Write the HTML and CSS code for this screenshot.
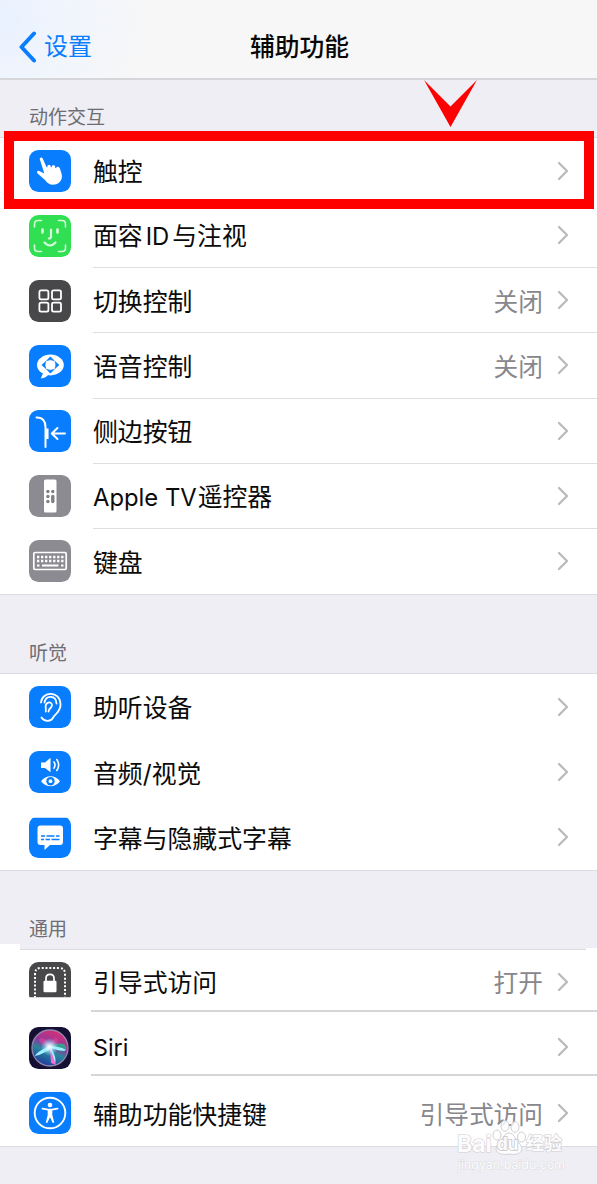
FILE: index.html
```html
<!DOCTYPE html>
<html lang="zh-CN">
<head>
<meta charset="utf-8">
<title>辅助功能</title>
<link rel="stylesheet" href="styles.css">
</head>
<body>
<svg class="defs" width="0" height="0"><defs>
  <symbol id="chevron" viewBox="0 0 12 20"><path d="M2 2l8 8-8 8" fill="none" stroke="#bababd" stroke-width="2.300" stroke-linecap="round" stroke-linejoin="round"/></symbol>
  <radialGradient id="siri-bg"><stop offset="0" stop-color="#3c1a66"/><stop offset="1" stop-color="#151033"/></radialGradient>
  <linearGradient id="siri-orb" x1="0.7" y1="0" x2="0.3" y2="1"><stop offset="0" stop-color="#e02c73"/><stop offset="0.42" stop-color="#8b3b9e"/><stop offset="0.6" stop-color="#27879c"/><stop offset="1" stop-color="#2035a0"/></linearGradient>
  <radialGradient id="siri-glow"><stop offset="0" stop-color="#fff"/><stop offset="0.3" stop-color="#d9f7ff" stop-opacity="0.85"/><stop offset="1" stop-color="#68dcff" stop-opacity="0"/></radialGradient>
</defs></svg>
<div class="screen">
  <header class="nav">
    <a class="back"><svg class="back-arrow" viewBox="0 0 18 32"><path d="M15.500 2.500L3 16l12.500 13.500" fill="none" stroke="#087dfe" stroke-width="4" stroke-linecap="round" stroke-linejoin="round"/></svg><span>设置</span></a>
    <h1 class="title">辅助功能</h1>
  </header>

  <h2 class="heading first">动作交互</h2>
  <section class="group">
    <div class="row"><svg class="icon blue" viewBox="0 0 42 42"><path d="M10.800 9.300C10.500 7.300 13 6.700 13.800 8.700L17.600 17.200L18.400 17.300V16C18.700 14.500 21.400 14.700 21.700 16V17.200L22.800 17.300V16C23.300 14.600 25.900 15 26.200 16.400V18L27.300 18.300V17.400C28 16.300 30.300 16.700 30.900 18.500L32.600 23.700C34 29 31 33.500 26 34.600C21.500 35.200 18.500 33.700 16 30L8.600 23.600C7.300 21.600 8.500 20.300 10.300 20.900L15.300 23.600Z" fill="#fff"/></svg><div class="cell"><span class="label">触控</span><svg class="chev"><use href="#chevron"/></svg></div></div>
    <div class="row"><svg class="icon green" viewBox="0 0 42 42"><g fill="none" stroke="#d6fbdb" stroke-linecap="round" stroke-width="1.600"><path d="M5.500 12V9Q5.500 5.500 9 5.500H12.500M29.500 5.500H33Q36.500 5.500 36.500 9V12M36.500 30V33Q36.500 36.500 33 36.500H29.500M12.500 36.500H9Q5.500 36.500 5.500 33V30"/><path d="M13.500 14.500V17.500M28.500 14.500V17.500" stroke-width="2.700"/><path d="M22 14.500V21.500Q22 23.500 19.800 23.500M15.500 27.500Q21 33.500 26.500 27.500" stroke-width="2.200"/></g></svg><div class="cell line"><span class="label">面容<span class="latin id">ID</span>与注视</span><svg class="chev"><use href="#chevron"/></svg></div></div>
    <div class="row"><svg class="icon dark" viewBox="0 0 42 42"><g fill="none" stroke="#fff" stroke-width="1.800"><rect x="10.400" y="10.400" width="9" height="9" rx="1.600"/><rect x="23" y="10.400" width="9" height="9" rx="1.600"/><rect x="10.400" y="22.700" width="9" height="9" rx="1.600"/><rect x="23" y="22.700" width="9" height="9" rx="1.600"/></g></svg><div class="cell line"><span class="label">切换控制</span><span class="value">关闭</span><svg class="chev"><use href="#chevron"/></svg></div></div>
    <div class="row"><svg class="icon blue" viewBox="0 0 42 42"><ellipse cx="21.400" cy="20" rx="13.400" ry="10.400" fill="#fff"/><path d="M14.500 27L11.800 33.500Q17 33 20 29Z" fill="#fff"/><path d="M17.500 15.800L21.400 11.800L25.300 15.800Q21.400 13.800 17.500 15.800ZM17.500 24.200L21.400 28.200L25.300 24.200Q21.400 26.200 17.500 24.200ZM16.800 16.400L12.800 20L16.800 23.600Q15 20 16.800 16.400ZM26 16.400L30 20L26 23.600Q27.800 20 26 16.400Z" fill="#087dfe" stroke="#087dfe" stroke-width=".6"/></svg><div class="cell line"><span class="label">语音控制</span><span class="value">关闭</span><svg class="chev"><use href="#chevron"/></svg></div></div>
    <div class="row"><svg class="icon blue" viewBox="0 0 42 42"><g fill="none" stroke="#fff" stroke-width="2" stroke-linecap="round" stroke-linejoin="round"><path d="M7.500 7.500C14 7.300 16.500 11.500 16.500 17V37"/><path d="M18.300 18.500V29" stroke-width="2.500" stroke-linecap="butt"/><path d="M36 23.500H23M28.500 18L22.800 23.500L28.500 29"/></g></svg><div class="cell line"><span class="label">侧边按钮</span><svg class="chev"><use href="#chevron"/></svg></div></div>
    <div class="row"><svg class="icon gray" viewBox="0 0 42 42"><rect x="15" y="4.500" width="12.500" height="33" rx="1.600" fill="#fff"/><g fill="#818087"><circle cx="18.900" cy="16.500" r="1.700"/><circle cx="23.800" cy="16.500" r="1.700"/><circle cx="18.900" cy="21.500" r="1.700"/><circle cx="18.900" cy="26.500" r="1.700"/><rect x="22.100" y="19.800" width="3.400" height="8.400" rx="1.700"/></g></svg><div class="cell line"><span class="label"><span class="latin tv">Apple TV</span>遥控器</span><svg class="chev"><use href="#chevron"/></svg></div></div>
    <div class="row"><svg class="icon gray" viewBox="0 0 42 42"><rect x="4.800" y="12.500" width="32.400" height="17" rx="1.300" fill="none" stroke="#fff" stroke-width="1.700"/><path d="M8 17H34.500M8 21H34.500" stroke="#fff" stroke-width="2.300" stroke-dasharray="2.300 1.730"/><path d="M8 25.500H10.500M13 25.500H29.500M32 25.500H34.500" stroke="#fff" stroke-width="2.200"/></svg><div class="cell"><span class="label">键盘</span><svg class="chev"><use href="#chevron"/></svg></div></div>
  </section>

  <h2 class="heading">听觉</h2>
  <section class="group">
    <div class="row"><svg class="icon blue" viewBox="0 0 42 42"><g fill="none" stroke="#fff" stroke-width="1.800" stroke-linecap="round"><path d="M12 16.500C13 5 31 4.500 31.500 18C32 25 27.500 26.500 24.500 31C22 36 15.500 36 12.500 31.500"/><path d="M15.500 16.500C17 8.500 27 9 27.500 17.500M16.800 25.500V22.500C15.500 16 22.500 14.500 23 19C23 22 19.500 22.500 19.500 25.500"/></g></svg><div class="cell"><span class="label">助听设备</span><svg class="chev"><use href="#chevron"/></svg></div></div>
    <div class="row"><svg class="icon blue" viewBox="0 0 42 42"><path d="M12 11.500H16L21.500 6.800V21.200L16 17H12Z" fill="#fff"/><path d="M25 11Q27 14 25 17.200M27.800 8.500Q31.500 14 27.800 19.500" fill="none" stroke="#fff" stroke-width="1.600" stroke-linecap="round"/><path d="M12 30.200C17 23.500 26 23.500 31 30.200C26 37 17 37 12 30.200Z" fill="#fff"/><circle cx="21.500" cy="30.200" r="4.200" fill="#087dfe"/><circle cx="21.500" cy="30.200" r="1.900" fill="#fff"/></svg><div class="cell"><span class="label">音频/视觉</span><svg class="chev"><use href="#chevron"/></svg></div></div>
    <div class="row"><svg class="icon blue trim-top" viewBox="0 0 42 42"><path d="M11.500 9.500H31Q34 9.500 34 12.500V26Q34 29 31 29H21L15.500 34V29H11.500Q8.500 29 8.500 26V12.500Q8.500 9.500 11.500 9.500Z" fill="#fff"/><path d="M12 20H16M17.500 20H25.500M27 20H30.500M12 23.600H15M16.500 23.600H21M22.500 23.600H30.500" stroke="#087dfe" stroke-width="1.500"/></svg><div class="cell"><span class="label">字幕与隐藏式字幕</span><svg class="chev"><use href="#chevron"/></svg></div></div>
  </section>

  <h2 class="heading">通用</h2>
  <section class="group general">
    <div class="row"><svg class="icon dark trim-bottom" viewBox="0 0 42 42"><path d="M6 36V12Q6 6 12 6H30Q36 6 36 12V36" fill="none" stroke="#fff" stroke-width="2" stroke-dasharray="2 1.800"/><rect x="14.500" y="18.800" width="13" height="11.500" rx="1.300" fill="#fff"/><path d="M17 19V16.500C17 11 25 11 25 16.500V19" fill="none" stroke="#fff" stroke-width="1.700"/></svg><div class="cell line raised"><span class="label">引导式访问</span><span class="value">打开</span><svg class="chev"><use href="#chevron"/></svg></div></div>
    <div class="row"><svg class="icon" viewBox="0 0 42 42"><rect width="42" height="42" fill="url(#siri-bg)"/><circle cx="21" cy="21" r="18" fill="url(#siri-orb)" stroke="#9186a9" stroke-width="1.300"/><path d="M21 20C10 17 8 12 12 11C16 10 20 16 21 20C23 10 28 9 29 13C31 17 25 20 21 20Z" fill="#da4298" opacity=".65"/><path d="M21 20C27 16 36 15 37 20C39 28 28 23 21 20Z" fill="#21b88f" opacity=".8"/><path d="M21 19C15 21 7 26 6 29C11 28 17 25 21 22C23 29 24 34 26 37C28 31 24 25 22 21C28 23 34 25 37 23C32 20 26 19 21 19Z" fill="#a4efff"/><path d="M21 21L27 38L22 36Z" fill="#f36bd0"/><circle cx="20.500" cy="20" r="9" fill="url(#siri-glow)"/></svg><div class="cell line raised more"><span class="label latin siri">Siri</span><svg class="chev"><use href="#chevron"/></svg></div></div>
    <div class="row"><svg class="icon blue" viewBox="0 0 42 42"><circle cx="21" cy="21" r="15.300" fill="none" stroke="#fff" stroke-width="1.900"/><circle cx="21" cy="13" r="2.300" fill="#fff"/><path d="M13.500 16.600L19 17.600H23L28.500 16.600" fill="none" stroke="#fff" stroke-width="1.900" stroke-linecap="round"/><path d="M18.700 17.500H23.300V23L25.300 30.800H23.600L21 25.200L18.400 30.800H16.700L18.700 23Z" fill="#fff"/></svg><div class="cell"><span class="label">辅助功能快捷键</span><span class="value">引导式访问</span><svg class="chev"><use href="#chevron"/></svg></div></div>
  </section>

  <div class="highlight"></div>
  <svg class="pointer" viewBox="0 0 54 48"><path d="M0 0L26.500 26.500L53 0L26.500 47Z" fill="#f00"/></svg>
  <div class="watermark">
    <svg class="paw" viewBox="0 0 34 36"><g fill="#fff" fill-opacity=".85" stroke="#d0d0d4" stroke-width="1"><ellipse cx="5" cy="15" rx="4" ry="5"/><ellipse cx="13" cy="6" rx="4" ry="5.300"/><ellipse cx="23" cy="7" rx="4" ry="5.300"/><ellipse cx="29.500" cy="17" rx="4" ry="5"/><path d="M17 13C22 13 23 19 27 23C34 31 27 36 17 34C7 36 0 31 7 23C11 19 12 13 17 13Z"/></g></svg>
    <div class="brand"><span class="bai">Bai</span><span class="du">du</span><span class="jy">经验</span></div>
    <div class="site">jingyan.baidu.com</div>
  </div>
</div>
</body>
</html>
```
FILE: styles.css
```css
* { box-sizing: border-box; }
body { margin: 0; background: #efeef4; font-family: Inter, "Noto Sans CJK SC", sans-serif; }
.defs { position: absolute; }
.screen { position: relative; width: 597px; height: 1184px; overflow: hidden; background: #efeef4; }
.nav { display: grid; grid-template-columns: 1fr auto 1fr; align-items: center; height: 80px; padding: 16px 18px 0 18px; border-bottom: 2px solid #d6d5da; background: radial-gradient(circle at 0 20px, #e9f1ff 0, #f1f5fc 70px, #f7f7f7 150px); }
.back { display: flex; align-items: center; gap: 7px; color: #087dfe; font-size: 24px; line-height: 36px; }
.back-arrow { width: 19px; height: 32px; }
.title { margin: 0 -1px 0 1px; font-size: 24.800px; line-height: 36px; font-weight: 500; color: #080808; }
.heading { height: 78.500px; margin: 0; padding: 45px 0 0 29px; font-size: 19px; line-height: 27px; font-weight: 400; color: #6d6d73; }
.heading.first { height: 57px; padding-top: 24px; }
.group { background: #fff; border-top: 1px solid #dcdce0; border-bottom: 1px solid #dcdce0; }
.row { display: flex; align-items: center; gap: 22px; height: 65.140px; padding-left: 29px; }
.icon { flex: none; width: 42px; height: 42px; border-radius: 9.500px; }
.blue { background: #087dfe; }
.green { background: #30e052; }
.dark { background: #48484a; }
.gray { background: #8c8b92; }
.trim-top { clip-path: inset(1.500px 0 0); }
.trim-bottom { clip-path: inset(0 0 6.500px); }
.cell { flex: 1; display: flex; align-items: center; height: 100%; padding-right: 28px; }
.line { border-bottom: 1.500px solid #dfdfe2; }
.label { flex: 1; padding-top: 3px; font-size: 24.850px; line-height: 36px; color: #0b0b0b; white-space: nowrap; }
.latin { font-size: 23.800px; }
.id { margin: 0 3px; }
.tv { margin-right: 1px; }
.siri { font-size: 23.300px; }
.value { margin-right: 14px; padding-top: 3px; font-size: 24.700px; line-height: 36px; color: #88878d; }
.chev { flex: none; width: 12px; height: 20px; }
.general { position: relative; }
.raised { align-self: flex-start; height: calc(100% - 3px); margin-left: -2px; padding-left: 2px; padding-top: 3px; border-bottom: 2px solid #d6d6d9; }
.raised.more { height: calc(100% - 5px); padding-top: 5px; }
.general::before { content: ""; position: absolute; left: 0; top: -6px; width: 20px; height: 8px; background: #fff; }
.general::after { content: ""; position: absolute; right: 0; top: -2px; width: 11px; height: 4px; background: #fff; }
.highlight { position: absolute; left: 4px; top: 131px; width: 590px; height: 78px; border: 10px solid #f00; }
.pointer { position: absolute; left: 424px; top: 80px; width: 54px; height: 48px; }
.watermark { position: absolute; left: 457px; top: 1120px; width: 108px; height: 54px; color: #fcfcfd; }
.paw { position: absolute; left: 35px; top: 0; width: 34px; height: 36px; }
.brand { position: absolute; left: 0; top: 13px; display: grid; grid-template-columns: 40px 29px auto; align-items: center; font-size: 23px; line-height: 22px; font-weight: 700; -webkit-text-stroke: 1.200px #cfcfd3; paint-order: stroke fill; }
.du { font-size: 17px; line-height: 20px; -webkit-text-stroke: 1.600px #c6c6ca; }
.jy { font-size: 18px; }
.site { position: absolute; left: 1px; top: 37px; font-size: 12.400px; line-height: 16px; -webkit-text-stroke: 1px #dcdce0; paint-order: stroke fill; }
```
